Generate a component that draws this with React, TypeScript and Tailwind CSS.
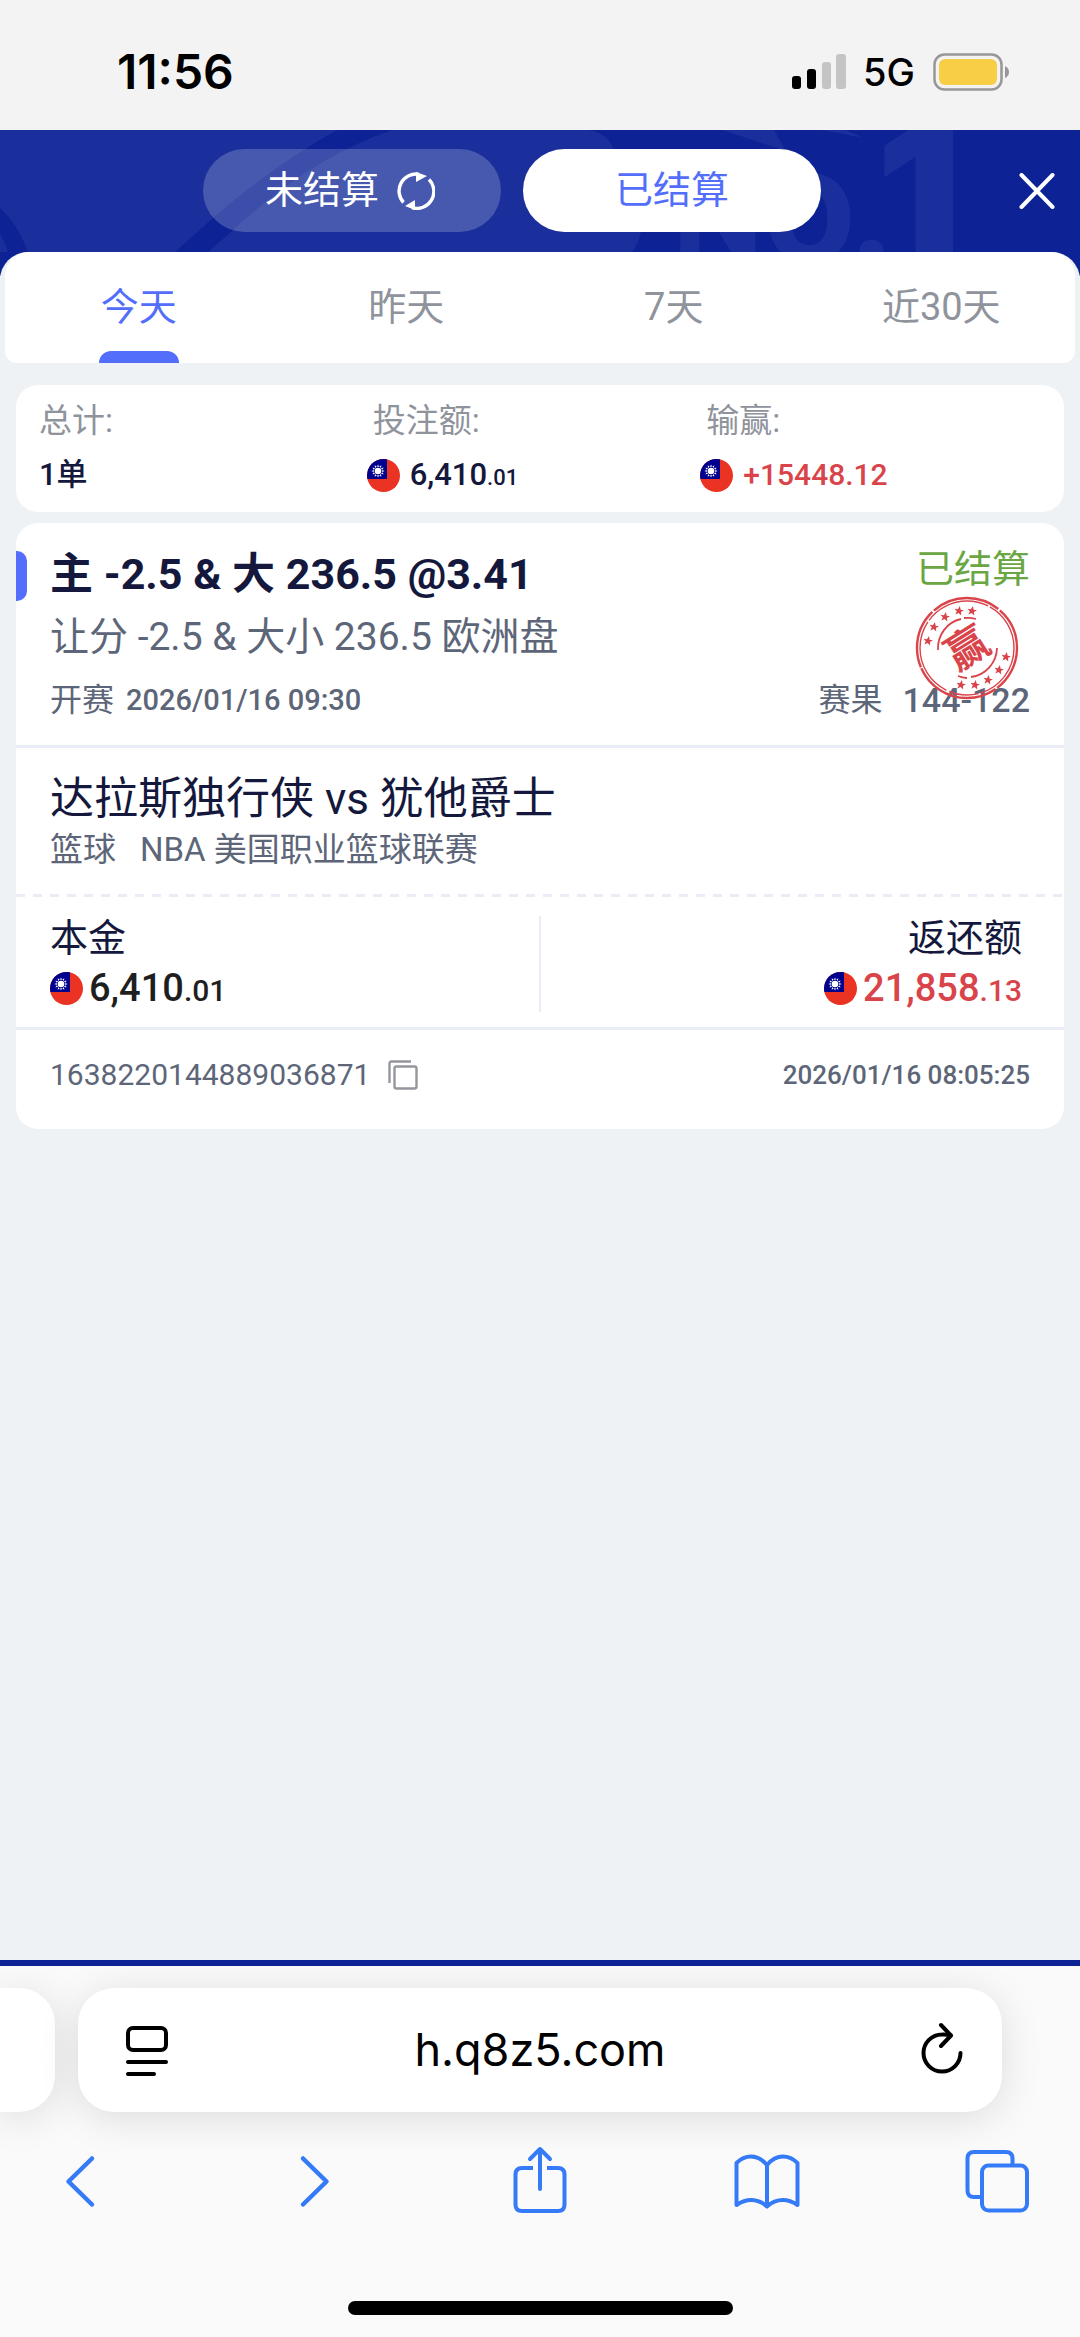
import React, { useState } from "react";

function Flag() {
  const rays = Array.from({ length: 12 }, (_, i) => i * 30);
  return (
    <svg viewBox="0 0 33 33" className="h-[33px] w-[33px] shrink-0 overflow-hidden rounded-full" aria-hidden="true">
      <rect width="33" height="33" fill="#ea3323" />
      <rect width="20" height="20" fill="#00008f" />
      <g transform="translate(11 12)" fill="#fff">
        {rays.map((a) => (
          <path key={a} d="M-1 -4.2 L0 -6.6 L1 -4.2 Z" transform={`rotate(${a})`} />
        ))}
        <circle r="3.3" />
      </g>
    </svg>
  );
}

function WinStamp() {
  const stars = [
    [-39, -7], [-33, -21], [-22, -31], [-8, -37], [5, -37],
    [39, 9], [32, 22], [21, 32], [8, 37], [-6, 37],
  ];
  return (
    <svg viewBox="-52 -52 104 104" className="absolute right-[45px] top-[73px] h-[104px] w-[104px]" role="img" aria-label="赢">
      <g fill="none" stroke="#d9444a">
        <circle r="50" strokeWidth="2.4" strokeDasharray="46 2 88 1 60 2 70 2 43" />
        <circle r="47" strokeWidth="1.4" strokeDasharray="60 2 30 3 80 2 66 2 50" />
        <path d="M-29 2 A29 30 0 0 1 -6 -29 M-3 -30 A30 30 0 0 1 9 -29" strokeWidth="1.8" />
        <path d="M30 0 A30 30 0 0 1 4 29 M0 30 A30 30 0 0 1 -9 28" strokeWidth="1.8" />
      </g>
      <g fill="#d9444a">
        {stars.map(([x, y]) => (
          <path
            key={`${x},${y}`}
            transform={`translate(${x} ${y}) rotate(10)`}
            d="M0 -5 L1.4 -1.6 L4.8 -1.5 L2.1 0.7 L3 4 L0 2.1 L-3 4 L-2.1 0.7 L-4.8 -1.5 L-1.4 -1.6 Z"
          />
        ))}
        <text
          transform="rotate(-32)"
          textAnchor="middle"
          y="15"
          fontSize="42"
          fontWeight="700"
          fontFamily="'Noto Sans CJK SC', sans-serif"
        >
          赢
        </text>
      </g>
    </svg>
  );
}

function HeaderArt() {
  return (
    <svg
      viewBox="0 0 1080 122"
      preserveAspectRatio="xMidYMin slice"
      className="absolute inset-0 h-full w-full"
      aria-hidden="true"
    >
      <rect width="1080" height="122" fill="#0c2295" />
      <g fill="#1a2f9b">
        <path d="M0 0 H337 Q270 38 213 88 L175 122 H28 Q17 93 0 78 Z" />
        <path d="M0 104 Q5 112 8 122 H0 Z" />
        <path d="M208 122 L232 101 Q310 28 392 0 H588 Q610 3 614 22 Q655 60 641 102 Q638 114 632 122 Z" />
        <path d="M722 0 H774 L786 21 Z" />
        <path d="M822 0 H846 L864 8 Z" />
        <g fontWeight="700" fontFamily="Roboto, sans-serif">
          <text x="672" y="131" fontSize="130">N</text>
          <text x="763" y="131" fontSize="164">o</text>
          <text x="850" y="131" fontSize="152">.</text>
        </g>
        <text x="876" y="133" fontSize="190" fontWeight="900" fontFamily="Inter, sans-serif">
          1
        </text>
      </g>
    </svg>
  );
}

function StatusBar() {
  return (
    <div className="flex h-[130px] items-center justify-between bg-[#f3f3f3] pl-[117px] pr-[70px] pt-3.5 font-['Inter'] text-black">
      <span className="text-[48px] font-semibold leading-none">11:56</span>
      <div className="flex items-center">
        <svg viewBox="0 0 54 36" className="h-[36px] w-[54px]" aria-hidden="true">
          <rect x="0" y="22" width="9" height="13" rx="3" />
          <rect x="15" y="15" width="9" height="20" rx="3" />
          <rect x="30" y="8" width="9" height="27" rx="3" fill="#c4c4c4" />
          <rect x="44" y="0" width="10" height="35" rx="3" fill="#c4c4c4" />
        </svg>
        <span className="ml-[17px] text-[38px] font-medium leading-none">5G</span>
        <svg viewBox="0 0 77 38" className="ml-[18px] h-[38px] w-[77px]" aria-hidden="true">
          <rect x="1.5" y="1.5" width="67" height="35" rx="10" fill="none" stroke="#979797" strokeWidth="2.5" />
          <rect x="6" y="6" width="58" height="26" rx="6" fill="#f8ce46" />
          <path d="M72 13 Q76 15 76 19 Q76 23 72 25 Z" fill="#979797" />
        </svg>
      </div>
    </div>
  );
}

const ranges = ["今天", "昨天", "7天", "近30天"];

export default function App() {
  const [range, setRange] = useState("今天");
  return (
    <div className="flex min-h-screen w-full flex-col bg-[#eef2f5] [font-family:Roboto,'Noto_Sans_CJK_SC',sans-serif]">
      <StatusBar />

      <header className="relative h-[146px] bg-[#0c2295]">
        <div className="absolute inset-x-0 top-0 h-[122px]">
          <HeaderArt />
        </div>
        <div className="relative flex pl-[30px] pt-[19px]">
          <div className="flex flex-1 justify-center gap-[22px]">
            <button className="flex h-[83px] w-[298px] items-center justify-center gap-[18px] rounded-full bg-white/20 pr-1 text-[38px] text-white">
              未结算
              <svg viewBox="0 0 38 38" className="h-[38px] w-[38px]" fill="none" stroke="#fff" strokeWidth="3.4" aria-hidden="true">
                <path d="M6.5 30.5 A17 17 0 0 1 22 2.3" />
                <path d="M32 7.5 A17 17 0 0 1 15 35.7" />
                <path d="M19 0 L30 4 L19 10 Z" fill="#fff" stroke="none" />
                <path d="M18 28 V38 L8 34 Z" fill="#fff" stroke="none" />
              </svg>
            </button>
            <button className="h-[83px] w-[298px] rounded-full bg-white text-[38px] text-[#536efb]">已结算</button>
          </div>
          <button aria-label="关闭" className="flex w-[86px] items-center justify-center">
            <svg viewBox="0 0 36 36" className="h-[36px] w-[36px]" stroke="#fff" strokeWidth="4" strokeLinecap="round" aria-hidden="true">
              <path d="M2.5 2 L33.5 34 M33.5 2 L2.5 34" />
            </svg>
          </button>
        </div>
      </header>

      <main className="relative -mt-6 flex-1 rounded-t-[28px] bg-[#eef2f5]">
        <nav className="mx-[5px] grid h-[111px] grid-cols-4 rounded-b-xl rounded-t-[24px] bg-white">
          {ranges.map((r) => (
            <button
              key={r}
              onClick={() => setRange(r)}
              className={
                r === range
                  ? "flex flex-col items-center pt-[27px] text-[38px] leading-[56px] text-[#536efb]"
                  : "flex flex-col items-center pt-[27px] text-[38px] leading-[56px] text-[#8f939c]"
              }
            >
              {r}
              {r === range && <span className="mt-auto h-3 w-20 rounded-t-xl bg-[#536efb]" />}
            </button>
          ))}
        </nav>

        <section className="mx-4 mt-[22px] grid h-[127px] grid-cols-3 rounded-[22px] bg-white pl-[23px] pr-6 pt-4">
          <div>
            <div className="text-[33px] leading-[40px] text-[#8f939c]">总计:</div>
            <div className="mt-3 text-[31px] font-medium leading-[44px] text-[#14183c]">1单</div>
          </div>
          <div>
            <div className="text-[33px] leading-[40px] text-[#8f939c]">投注额:</div>
            <div className="-ml-1.5 mt-3 flex h-[44px] items-center gap-2.5 text-[#14183c]">
              <Flag />
              <span className="text-[31px] font-medium leading-[44px]">
                6,410<span className="text-[22px] leading-none">.01</span>
              </span>
            </div>
          </div>
          <div>
            <div className="text-[33px] leading-[40px] text-[#8f939c]">输赢:</div>
            <div className="-ml-1.5 mt-3 flex h-[44px] items-center gap-2.5 text-[#d9444a]">
              <Flag />
              <span className="text-[30px] font-medium leading-[44px]">+15448.12</span>
            </div>
          </div>
        </section>

        <article className="relative mx-4 mt-[11px] rounded-[22px] bg-white">
          <span className="absolute left-0 top-[28px] h-[50px] w-[11px] rounded-r-[10px] bg-[#536efb]" />
          <div className="flex justify-between border-b-[3px] border-[#ebedf6] pb-[25px] pl-[34px] pr-[34px] pt-[26px]">
            <div>
              <h2 className="text-[43px] font-bold leading-[50px] text-[#14183c]">主 -2.5 &amp; 大 236.5 @3.41</h2>
              <p className="mt-[13px] text-[39px] leading-[50px] text-[#5d6678]">让分 -2.5 &amp; 大小 236.5 欧洲盘</p>
              <p className="mt-[18px] flex items-center gap-3 text-[#5d6678]">
                <span className="text-[32px] leading-[40px]">开赛</span>
                <span className="text-[29px] font-medium leading-[40px]">2026/01/16 09:30</span>
              </p>
            </div>
            <div className="flex flex-col items-end">
              <span className="text-[38px] leading-[40px] text-[#6aa642]">已结算</span>
              <p className="mt-auto flex items-center gap-5 leading-[40px] text-[#5d6678]">
                <span className="text-[32px]">赛果</span>
                <span className="text-[34px] font-medium">144-122</span>
              </p>
            </div>
          </div>
          <WinStamp />

          <div className="px-[34px] pb-6 pt-[21px]">
            <h3 className="text-[44px] leading-[60px] text-[#14183c]">达拉斯独行侠 vs 犹他爵士</h3>
            <p className="mt-px flex gap-6 text-[33px] leading-[40px] text-[#5d6678]">
              <span>篮球</span>
              <span>NBA 美国职业篮球联赛</span>
            </p>
          </div>
          <div className="h-[3px] bg-[repeating-linear-gradient(90deg,#ebedf6_0_9px,transparent_9px_17px)]" />

          <div className="flex justify-between border-b-[3px] border-[#ebedf6] pb-[15px] pl-[34px] pr-[42px] pt-[19px]">
            <div className="flex-1">
              <div className="text-[38px] leading-[44px] text-[#14183c]">本金</div>
              <div className="mt-1 flex h-[48px] items-center gap-1.5 text-[#1f1f1f]">
                <Flag />
                <span className="text-[38px] font-medium leading-[48px]">
                  6,410<span className="text-[30px] leading-none">.01</span>
                </span>
              </div>
            </div>
            <div className="ml-2 w-0.5 bg-[#ebedf6]" />
            <div className="flex flex-1 flex-col items-end">
              <div className="text-[38px] leading-[44px] text-[#14183c]">返还额</div>
              <div className="mt-1 flex h-[48px] items-center gap-1.5 text-[#d9444a]">
                <Flag />
                <span className="text-[38px] font-medium leading-[48px]">
                  21,858<span className="text-[30px] leading-none">.13</span>
                </span>
              </div>
            </div>
          </div>

          <div className="flex items-center justify-between px-[34px] pb-[34px] pt-[25px] leading-[40px] text-[#5d6678]">
            <div className="flex h-[40px] items-center gap-[18px]">
              <span className="text-[30px]">1638220144889036871</span>
              <button aria-label="复制">
                <svg viewBox="0 0 30 30" className="h-[30px] w-[30px]" fill="none" stroke="#94979e" strokeWidth="2.4" aria-hidden="true">
                  <path d="M1.5 23 V3.5 Q1.5 1.5 3.5 1.5 H23" />
                  <rect x="6.5" y="6.5" width="22" height="22" rx="2" />
                </svg>
              </button>
            </div>
            <time className="text-[26px] font-medium">2026/01/16 08:05:25</time>
          </div>
        </article>
      </main>

      <footer className="overflow-hidden border-t-[6px] border-[#0c2295] bg-[#fafafa] pb-[22px] pt-[22px]">
        <div className="flex h-[124px] gap-[23px] pr-[78px]">
          <div className="w-[55px] rounded-r-[36px] bg-white shadow-[0_6px_40px_rgba(0,0,0,0.12)]" />
          <div className="flex flex-1 items-center justify-between rounded-[36px] bg-white pl-[40px] pr-[30px] shadow-[0_6px_40px_rgba(0,0,0,0.12)]">
            <button aria-label="页面设置">
              <svg viewBox="0 0 60 60" className="h-[60px] w-[60px]" fill="none" stroke="#000" strokeWidth="4" strokeLinecap="round" aria-hidden="true">
                <rect x="10" y="8" width="38" height="22" rx="5" />
                <path d="M10 42 H48 M10 54 H36" />
              </svg>
            </button>
            <input
              aria-label="网址"
              defaultValue="h.q8z5.com"
              className="w-0 flex-1 bg-transparent pr-[10px] text-center font-['Inter'] text-[45px] text-black outline-none"
            />
            <button aria-label="重新载入">
              <svg viewBox="0 0 60 60" className="h-[60px] w-[60px]" fill="none" stroke="#000" strokeWidth="4" strokeLinecap="round" strokeLinejoin="round" aria-hidden="true">
                <path d="M48.500 33 A18.500 18.500 0 1 1 30 14.500 Q35 14.300 38.500 15.500" />
                <path d="M29 5 L39 15.500 L29 26" />
              </svg>
            </button>
          </div>
        </div>
        <nav className="mt-[33px] flex items-center justify-between pl-[48px] pr-[51px]">
          <button aria-label="后退">
            <svg viewBox="0 0 64 72" className="h-[72px] w-[64px]" fill="none" stroke="#357bf8" strokeWidth="4.500" strokeLinecap="round" strokeLinejoin="round">
              <path d="M44 13.500 L20.500 36.500 L44 59.500" />
            </svg>
          </button>
          <button aria-label="前进">
            <svg viewBox="0 0 64 72" className="h-[72px] w-[64px]" fill="none" stroke="#357bf8" strokeWidth="4.500" strokeLinecap="round" strokeLinejoin="round">
              <path d="M26 13.500 L49.500 36.500 L26 59.500" />
            </svg>
          </button>
          <button aria-label="分享">
            <svg viewBox="0 0 64 72" className="h-[72px] w-[64px]" fill="none" stroke="#357bf8" strokeWidth="4" strokeLinecap="butt" strokeLinejoin="round">
              <path d="M27 23 H16 Q9.500 23 9.500 29.500 V59.500 Q9.500 66 16 66 H52 Q58.500 66 58.500 59.500 V29.500 Q58.500 23 52 23 H41" />
              <path d="M34 44 V4 M24 14 L34 4 L44 14" strokeLinecap="round" />
            </svg>
          </button>
          <button aria-label="书签">
            <svg viewBox="0 0 66 72" className="h-[72px] w-[66px]" fill="none" stroke="#357bf8" strokeWidth="4" strokeLinecap="round" strokeLinejoin="round">
              <path d="M33 20 Q26 11.500 17 11.500 Q9 11.500 2.500 18 V60 Q10 55 17 55 Q26 55 33 61.500 Q40 55 49 55 Q56 55 63.500 60 V18 Q57 11.500 49 11.500 Q40 11.500 33 20 V61" />
            </svg>
          </button>
          <button aria-label="标签页">
            <svg viewBox="0 0 64 72" className="h-[72px] w-[64px]" fill="none" stroke="#357bf8" strokeWidth="4" strokeLinejoin="round">
              <path d="M16 52 H9 Q2.500 52 2.500 45.500 V13.500 Q2.500 7 9 7 H41 Q47.500 7 47.500 13.500 V20" />
              <rect x="17" y="20.500" width="45" height="45" rx="6.500" />
            </svg>
          </button>
        </nav>
        <div className="mx-auto mt-[84px] h-3.5 w-[385px] rounded-full bg-black" />
      </footer>
    </div>
  );
}
